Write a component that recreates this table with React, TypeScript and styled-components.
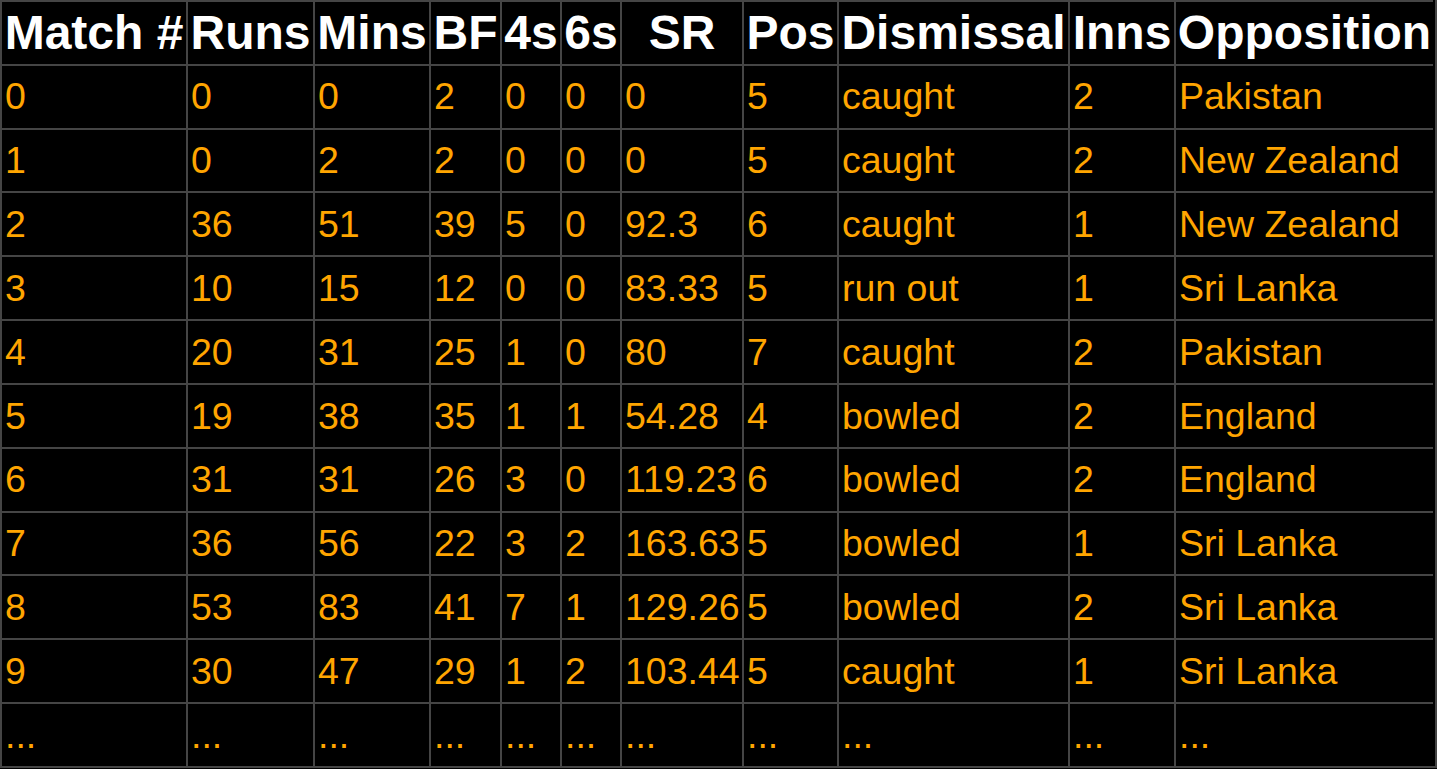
import React from 'react';
import styled, { createGlobalStyle } from 'styled-components';

const GlobalStyle = createGlobalStyle`
  html, body {
    margin: 0;
    padding: 0;
    background: #000;
  }
`;

const COLUMNS = '186px 127px 116px 71px 60px 60px 122px 95px 231px 106px 259px';

const headers = ['Match #', 'Runs', 'Mins', 'BF', '4s', '6s', 'SR', 'Pos', 'Dismissal', 'Inns', 'Opposition'];

const rows: string[][] = [
  ['0', '0', '0', '2', '0', '0', '0', '5', 'caught', '2', 'Pakistan'],
  ['1', '0', '2', '2', '0', '0', '0', '5', 'caught', '2', 'New Zealand'],
  ['2', '36', '51', '39', '5', '0', '92.3', '6', 'caught', '1', 'New Zealand'],
  ['3', '10', '15', '12', '0', '0', '83.33', '5', 'run out', '1', 'Sri Lanka'],
  ['4', '20', '31', '25', '1', '0', '80', '7', 'caught', '2', 'Pakistan'],
  ['5', '19', '38', '35', '1', '1', '54.28', '4', 'bowled', '2', 'England'],
  ['6', '31', '31', '26', '3', '0', '119.23', '6', 'bowled', '2', 'England'],
  ['7', '36', '56', '22', '3', '2', '163.63', '5', 'bowled', '1', 'Sri Lanka'],
  ['8', '53', '83', '41', '7', '1', '129.26', '5', 'bowled', '2', 'Sri Lanka'],
  ['9', '30', '47', '29', '1', '2', '103.44', '5', 'caught', '1', 'Sri Lanka'],
  ['...', '...', '...', '...', '...', '...', '...', '...', '...', '...', '...'],
];

const Table = styled.div`
  display: flex;
  flex-direction: column;
  width: 1435px;
  background: #000;
  border-right: 2px solid #454545;
  border-bottom: 2px solid #454545;
  font-family: 'Liberation Sans', Arial, sans-serif;
`;

const Row = styled.div`
  display: grid;
  grid-template-columns: ${COLUMNS};
  height: 63.83px;
`;

const Cell = styled.div<{ $head?: boolean }>`
  box-sizing: border-box;
  display: flex;
  align-items: center;
  justify-content: ${({ $head }) => ($head ? 'center' : 'flex-start')};
  padding: 1px 3px 0;
  border-left: 2px solid #454545;
  border-top: 2px solid #454545;
  white-space: nowrap;
  overflow: hidden;
  color: ${({ $head }) => ($head ? '#ffffff' : '#ffa500')};
  font-weight: ${({ $head }) => ($head ? 700 : 400)};
  font-size: ${({ $head }) => ($head ? '48px' : '37.5px')};
  line-height: 1;
`;

export default function App() {
  return (
    <>
      <GlobalStyle />
      <Table>
        <Row>
          {headers.map((h) => (
            <Cell key={h} $head>
              {h}
            </Cell>
          ))}
        </Row>
        {rows.map((r, i) => (
          <Row key={i}>
            {r.map((v, j) => (
              <Cell key={j}>{v}</Cell>
            ))}
          </Row>
        ))}
      </Table>
    </>
  );
}
